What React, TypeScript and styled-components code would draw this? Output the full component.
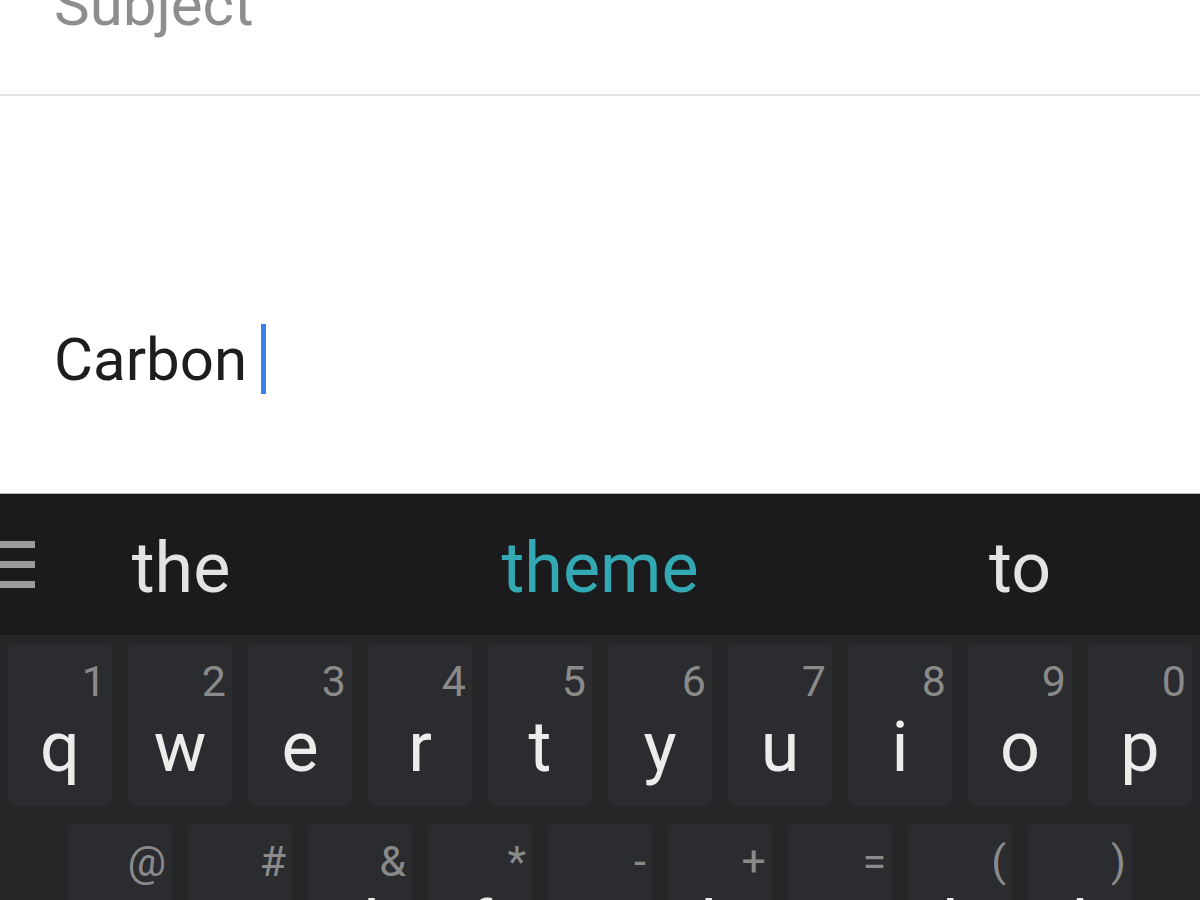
import React from "react";
import styled, { createGlobalStyle } from "styled-components";

const Global = createGlobalStyle`
  html, body { margin: 0; padding: 0; background: #ffffff; }
  body { font-family: Roboto, "Noto Sans", Arial, sans-serif; }
`;

const Screen = styled.div`
  width: 1200px;
  height: 900px;
  overflow: hidden;
  display: flex;
  flex-direction: column;
  background: #ffffff;
`;

const SubjectField = styled.div`
  height: 96px;
  flex: none;
  box-sizing: border-box;
  border-bottom: 2px solid #e3e3e3;
  padding-left: 54px;
  overflow: hidden;
`;

const SubjectText = styled.div`
  font-size: 60px;
  line-height: 60px;
  margin-top: -25px;
  color: #8e8e8e;
`;

const Body = styled.div`
  flex: none;
  height: 397px;
  padding-left: 54px;
  box-sizing: border-box;
`;

const BodyText = styled.div`
  font-size: 60px;
  line-height: 60px;
  margin-top: 228px;
  color: #1d1d1d;
`;

const Cursor = styled.span`
  display: inline-block;
  width: 5px;
  height: 70px;
  margin-left: 14px;
  vertical-align: -14px;
  background: #3a7ff0;
`;

const Keyboard = styled.div`
  flex: 1;
  display: flex;
  flex-direction: column;
  border-top: 1px solid #b4b4b4;
  background: #262729;
`;

const SuggestionBar = styled.div`
  height: 141px;
  flex: none;
  display: grid;
  grid-template-columns: 40px 282px 556px 284px 38px;
  align-items: center;
  background: #1b1b1d;
`;

const MenuIcon = styled.svg`
  display: block;
  width: 36px;
  height: 48px;
`;

const Suggestion = styled.div<{ $active?: boolean }>`
  text-align: center;
  font-size: 70px;
  line-height: 70px;
  padding-top: 6px;
  color: ${(p) => (p.$active ? "#33aab3" : "#e3e3e3")};
`;

const KeyArea = styled.div`
  flex: 1;
  display: flex;
  flex-direction: column;
  gap: 18px;
  padding-top: 9px;
`;

const KeyRow = styled.div<{ $offset: number }>`
  display: flex;
  gap: 16px;
  padding-left: ${(p) => p.$offset}px;
`;

const Key = styled.div`
  flex: none;
  width: 104px;
  height: 162px;
  box-sizing: border-box;
  border-radius: 8px;
  background: #2b2c2f;
  display: flex;
  flex-direction: column;
  padding-top: 16px;
`;

const Hint = styled.div`
  align-self: flex-end;
  margin-right: 6px;
  font-size: 43px;
  line-height: 43px;
  height: 43px;
  color: #8a8a8a;
`;

const Main = styled.div`
  text-align: center;
  margin-top: 9px;
  font-size: 70px;
  line-height: 70px;
  color: #ececec;
`;

const row1 = [
  ["q", "1"], ["w", "2"], ["e", "3"], ["r", "4"], ["t", "5"],
  ["y", "6"], ["u", "7"], ["i", "8"], ["o", "9"], ["p", "0"],
];
const row2 = [
  ["a", "@"], ["s", "#"], ["d", "&"], ["f", "*"], ["g", "-"],
  ["h", "+"], ["j", "="], ["k", "("], ["l", ")"],
];

export default function App() {
  return (
    <Screen>
      <Global />
      <SubjectField>
        <SubjectText>Subject</SubjectText>
      </SubjectField>
      <Body>
        <BodyText>
          Carbon
          <Cursor />
        </BodyText>
      </Body>
      <Keyboard>
        <SuggestionBar>
          <MenuIcon viewBox="0 0 36 48">
            <rect x="0" y="0" width="35" height="7" fill="#9b9b9b" />
            <rect x="0" y="20" width="35" height="7" fill="#9b9b9b" />
            <rect x="0" y="40" width="35" height="7" fill="#9b9b9b" />
          </MenuIcon>
          <Suggestion>the</Suggestion>
          <Suggestion $active>theme</Suggestion>
          <Suggestion>to</Suggestion>
          <div />
        </SuggestionBar>
        <KeyArea>
          <KeyRow $offset={8}>
            {row1.map(([l, h]) => (
              <Key key={l}>
                <Hint>{h}</Hint>
                <Main>{l}</Main>
              </Key>
            ))}
          </KeyRow>
          <KeyRow $offset={68}>
            {row2.map(([l, h]) => (
              <Key key={l}>
                <Hint>{h}</Hint>
                <Main>{l}</Main>
              </Key>
            ))}
          </KeyRow>
        </KeyArea>
      </Keyboard>
    </Screen>
  );
}
